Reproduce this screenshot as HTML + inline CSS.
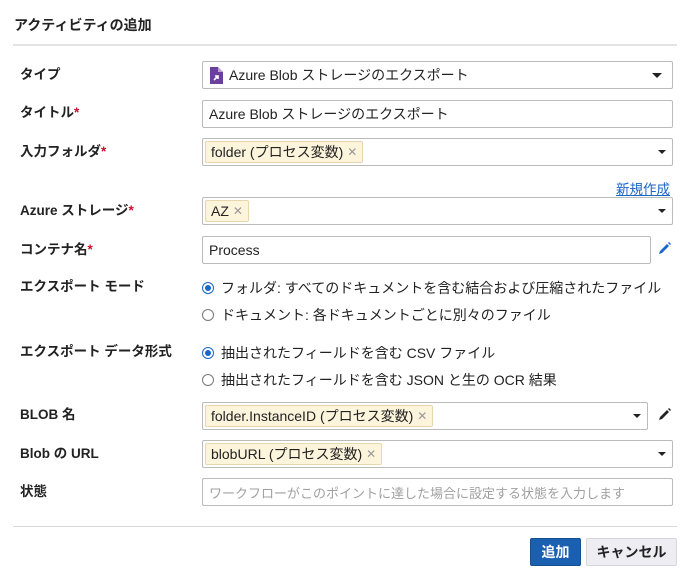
<!DOCTYPE html>
<html><head><meta charset="utf-8"><style>
*{box-sizing:border-box;margin:0;padding:0}
body{width:690px;height:579px;background:#fff;font-family:"Liberation Sans","Noto Sans CJK JP",sans-serif;color:#222;position:relative;overflow:hidden;font-size:14px}
.a{position:absolute}
.h{left:14px;top:15px;font-size:14px;font-weight:bold}
.hr{height:2px;background:#e3e3e3}
.lbl{left:20px;font-size:13.5px;font-weight:bold;color:#222}
.lbl i{color:#c8102e;font-style:normal}
.box{left:202px;width:471px;height:28px;border:1px solid #bbb;border-radius:2px;background:#fff;display:flex;align-items:center;padding-left:6px;font-size:14px}
.tag{background:#fdf4dc;border:1px solid #e6d7ae;border-radius:2px;height:22px;padding:0 5px;display:flex;align-items:center;margin-left:-2px;font-size:14px}
.tag s{text-decoration:none;color:#999;margin-left:4px;font-size:12px}
.car{position:absolute;right:6px;top:11px;width:0;height:0;border-left:4px solid transparent;border-right:4px solid transparent;border-top:4px solid #222}
.rad{left:202px;font-size:14px;display:flex;align-items:center}
.rb{width:12px;height:12px;border:1px solid #777;border-radius:50%;margin-right:7px;position:relative;background:#fff}
.rb.on{border-color:#1a66c9}
.rb.on:after{content:"";position:absolute;left:2px;top:2px;width:6px;height:6px;border-radius:50%;background:#1a66c9}
.pen{width:13px;height:13px}
</style></head><body>
<div class="a h">アクティビティの追加</div>
<div class="a hr" style="left:13px;top:44px;width:664px"></div>

<div class="a lbl" style="top:63px">タイプ</div>
<div class="a box" style="top:61px"><svg width="14" height="17" viewBox="0 0 14 17" style="margin-right:6px"><path d="M1 0h8l5 5v12H1z" fill="#6b3fa0"/><path d="M9 0v5h5z" fill="#b9a3d4"/><path d="M5 13l4-4M6 9h3v3" stroke="#fff" stroke-width="1.6" fill="none"/></svg>Azure Blob ストレージのエクスポート<span class="car" style="top:11px;border-width:5px 5px 0 5px;right:10px"></span></div>

<div class="a lbl" style="top:101px">タイトル<i>*</i></div>
<div class="a box" style="top:100px">Azure Blob ストレージのエクスポート</div>

<div class="a lbl" style="top:140px">入力フォルダ<i>*</i></div>
<div class="a box" style="top:138px;padding-left:4px"><span class="tag">folder (プロセス変数)<s>✕</s></span><span class="car"></span></div>

<div class="a" style="left:616px;top:178px;font-size:13.5px;color:#1a66c9;text-decoration:underline">新規作成</div>

<div class="a lbl" style="top:199px">Azure ストレージ<i>*</i></div>
<div class="a box" style="top:197px;padding-left:4px"><span class="tag">AZ<s>✕</s></span><span class="car"></span></div>

<div class="a lbl" style="top:238px">コンテナ名<i>*</i></div>
<div class="a box" style="top:236px;width:449px">Process</div>
<svg class="a pen" style="left:658px;top:242px" viewBox="0 0 13 13"><path d="M1 12l1-3 7-7 2 2-7 7z M10 1l1-1 2 2-1 1z" fill="#1a66c9"/></svg>

<div class="a lbl" style="top:275px">エクスポート モード</div>
<div class="a rad" style="top:278px"><span class="rb on"></span>フォルダ: すべてのドキュメントを含む結合および圧縮されたファイル</div>
<div class="a rad" style="top:305px"><span class="rb"></span>ドキュメント: 各ドキュメントごとに別々のファイル</div>

<div class="a lbl" style="top:340px">エクスポート データ形式</div>
<div class="a rad" style="top:343px"><span class="rb on"></span>抽出されたフィールドを含む CSV ファイル</div>
<div class="a rad" style="top:370px"><span class="rb"></span>抽出されたフィールドを含む JSON と生の OCR 結果</div>

<div class="a lbl" style="top:403px">BLOB 名</div>
<div class="a box" style="top:402px;width:446px;padding-left:4px"><span class="tag">folder.InstanceID (プロセス変数)<s>✕</s></span><span class="car"></span></div>
<svg class="a pen" style="left:658px;top:408px" viewBox="0 0 13 13"><path d="M1 12l1-3 7-7 2 2-7 7z M10 1l1-1 2 2-1 1z" fill="#222"/></svg>

<div class="a lbl" style="top:442px">Blob の URL</div>
<div class="a box" style="top:440px;padding-left:4px"><span class="tag">blobURL (プロセス変数)<s>✕</s></span><span class="car"></span></div>

<div class="a lbl" style="top:480px">状態</div>
<div class="a box" style="top:478px;color:#a0a0a0;font-size:13px">ワークフローがこのポイントに達した場合に設定する状態を入力します</div>

<div class="a hr" style="left:13px;top:526px;width:664px;height:1px;background:#d8d8d8"></div>
<div class="a" style="left:530px;top:538px;width:51px;height:28px;background:#1a5fb0;border:1px solid #14508f;border-radius:2px;color:#fff;font-weight:bold;font-size:14px;display:flex;align-items:center;justify-content:center">追加</div>
<div class="a" style="left:586px;top:538px;width:91px;height:28px;background:#eeeef2;border:1px solid #d6d6dc;border-radius:2px;color:#222;font-weight:bold;font-size:14px;display:flex;align-items:center;justify-content:center">キャンセル</div>
</body></html>
